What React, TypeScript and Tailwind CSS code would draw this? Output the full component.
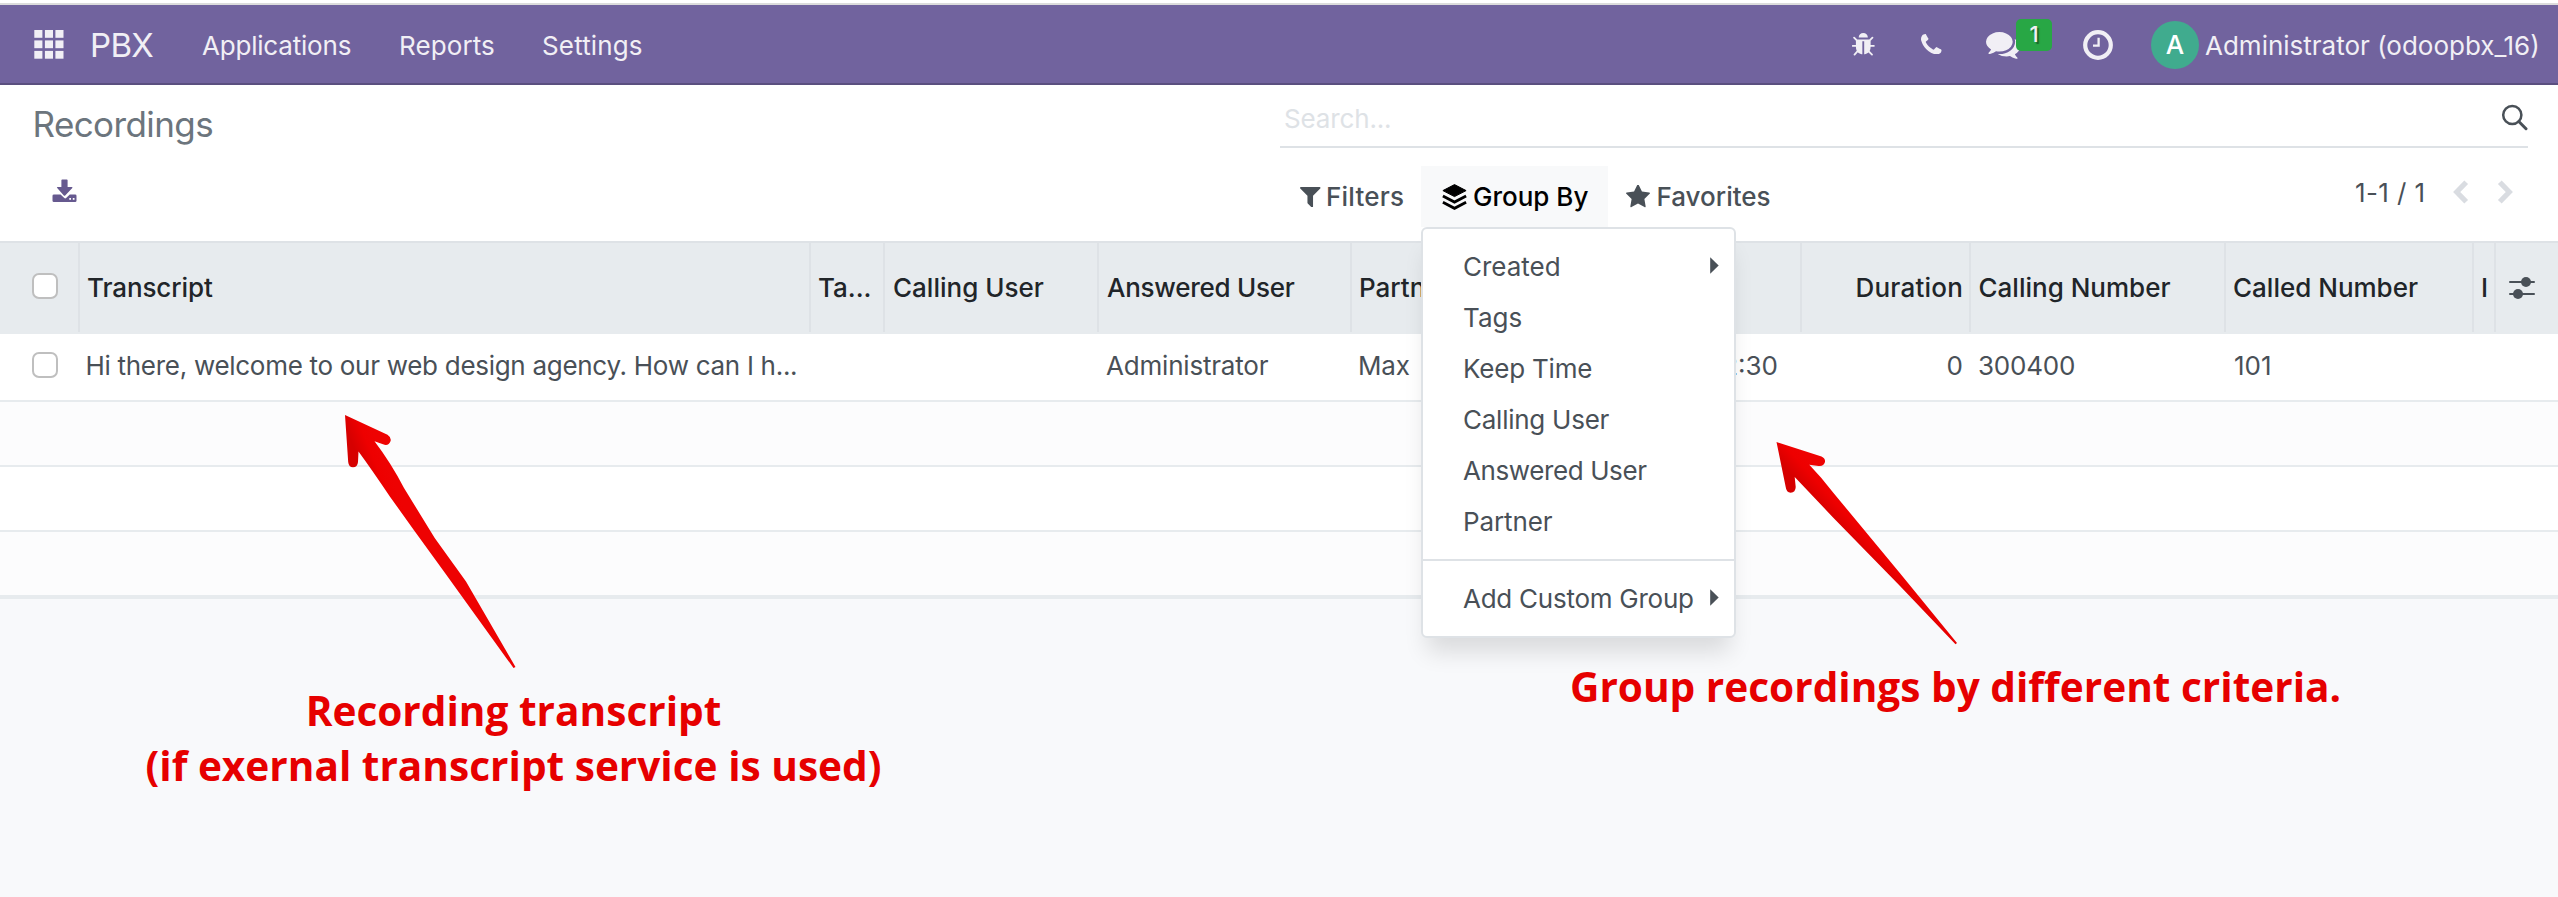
import { clsx } from 'clsx';
import type { ReactNode } from 'react';

function AppsIcon() {
  return (
    <svg className="block h-[29px] w-[30px]" viewBox="0 0 30 29" fill="currentColor">
      {[0, 10.4, 20.9].map((y) =>
        [0.3, 10.9, 21.4].map((x) => <rect key={`${x}-${y}`} x={x} y={y} width="8.1" height="7.8" />),
      )}
    </svg>
  );
}

function BugIcon() {
  return (
    <svg className="block h-[23px] w-[23px]" viewBox="112 64 1600 1600" fill="currentColor">
      <path d="M1696 960q0 26-19 45t-45 19h-224q0 171-67 290l208 209q19 19 19 45t-19 45q-18 19-45 19t-45-19l-198-197q-5 5-15 13t-42 28.5-65 36.5-82 29-97 13v-896h-128v896q-51 0-101.5-13.5t-87-33-66-39-43.5-32.5l-15-14-183 207q-20 21-48 21-24 0-43-17-19-18-20.5-44.5t15.5-46.5l202-227q-58-114-58-274h-224q-26 0-45-19t-19-45 19-45 45-19h224v-294l-173-173q-19-19-19-45t19-45 45-19 45 19l173 173h844l173-173q19-19 45-19t45 19 19 45-19 45l-173 173v294h224q26 0 45 19t19 45zm-480-576h-640q0-133 93.5-226.5t226.5-93.5 226.5 93.5 93.5 226.5z" />
    </svg>
  );
}

function PhoneIcon() {
  return (
    <svg className="block h-[20.5px] w-[20.5px]" viewBox="192 128 1408 1408" fill="currentColor">
      <path d="M1600 1240q0 27-10 70.5t-21 68.5q-21 50-122 106-94 51-186 51-27 0-53-3.5t-57.5-12.5-47-14.5-55.5-20.5-49-18q-98-35-175-83-127-79-264-216t-216-264q-48-77-83-175-3-9-18-49t-20.5-55.5-14.5-47-12.5-57.5-3.5-53q0-92 51-186 56-101 106-122 25-11 68.5-21t70.5-10q14 0 21 3 18 6 53 76 11 19 30 54t35 63.5 31 53.5q3 4 17.5 25t21.5 35.5 7 28.5q0 20-28.5 50t-62 55-62 53-28.5 46q0 9 5 22.5t8.5 20.5 14 24 11.5 19q76 137 174 235t235 174q2 1 19 11.5t24 14 20.5 8.5 22.5 5q18 0 46-28.5t53-62 55-62 50-28.5q14 0 28.5 7t35.5 21.5 25 17.5q25 15 53.5 31t63.5 35 54 30q70 35 76 53 3 7 3 21z" />
    </svg>
  );
}

function CommentsIcon() {
  return (
    <svg className="block h-[27px] w-[34px]" viewBox="0 256 1792 1410" fill="currentColor">
      <path d="M1408 768q0 139-94 257t-256.5 186.5-353.5 68.5q-86 0-176-16-124 88-278 128-36 9-86 16h-3q-11 0-20.5-8t-11.5-21q-1-3-1-6.5t.5-6.5 2-6l2.5-5 3.5-5.5 4-5 4.5-5 4-4.5q5-6 23-25t26-29.5 22.5-29 25-38.5 20.5-44q-124-72-195-177t-71-224q0-139 94-257t256.5-186.5 353.5-68.5 353.5 68.5 256.5 186.5 94 257zm384 256q0 120-71 224.5t-195 176.5q10 24 20.5 44t25 38.5 22.5 29 26 29.5 23 25q1 1 4 4.5t4.5 5 4 5 3.5 5.5l2.5 5 2 6 .5 6.5-1 6.5q-3 14-13 22t-22 7q-50-7-86-16-154-40-278-128-90 16-176 16-271 0-472-132 58 4 88 4 161 0 309-45t264-129q125-92 192-212t67-254q0-77-23-152 129 71 204 178t75 230z" />
    </svg>
  );
}

function ClockIcon() {
  return (
    <svg className="block h-[30px] w-[30px]" viewBox="0 0 30 30" fill="none" stroke="currentColor">
      <circle cx="15" cy="15" r="12.8" strokeWidth="4.2" />
      <path d="M15.6 7.8v7.9H10" strokeWidth="2.3" />
    </svg>
  );
}

function DownloadIcon() {
  return (
    <svg className="block h-[24px] w-[26px]" viewBox="0 0 26 24" fill="currentColor">
      <path d="M2 15.4h6.600l3.700 3.600q.9.800 1.800 0l3.700-3.600h5.300q1.400 0 1.400 1.400v4.900q0 1.400-1.400 1.400H1.900q-1.400 0-1.400-1.400v-4.900q0-1.400 1.500-1.400z" />
      <path d="M10.2.4h4.600q.8 0 .8.8v6.700h4.300q1.100.2.400 1.100l-7.100 7.500q-.7.500-1.400 0L5.200 9q-.8-.9.300-1.100h3.900V1.200q0-.8.8-.8z" />
      <rect x="17.3" y="19" width="1.7" height="1.8" fill="#fff" />
      <rect x="20.8" y="19" width="1.7" height="1.8" fill="#fff" />
    </svg>
  );
}

function SearchIcon() {
  return (
    <svg className="block h-[27px] w-[27px]" viewBox="0 0 27 27" fill="none" stroke="currentColor">
      <circle cx="11.3" cy="11" r="9.1" strokeWidth="2.5" />
      <path d="M17.8 17.5l7.2 7.2" strokeWidth="3" strokeLinecap="round" />
    </svg>
  );
}

function FilterIcon() {
  return (
    <svg className="block h-[20.5px] w-[20.5px]" viewBox="192 256 1408 1408" fill="currentColor">
      <path d="M1595 295q17 41-14 70l-493 493v742q0 42-39 59-13 5-25 5-27 0-45-19l-256-256q-19-19-19-45v-486l-493-493q-31-29-14-70 17-39 59-39h1280q42 0 59 39z" />
    </svg>
  );
}

function LayersIcon() {
  return (
    <svg className="block h-[27px] w-[25px]" viewBox="0 0 25 27" fill="none" stroke="currentColor">
      <path d="M12.5.6l11.6 6-11.6 6-11.6-6z" fill="currentColor" strokeWidth="1" strokeLinejoin="round" />
      <path d="M.9 12.1l11.6 6 11.6-6" strokeWidth="2.8" />
      <path d="M.9 18.3l11.6 6 11.6-6" strokeWidth="2.8" />
    </svg>
  );
}

function StarIcon() {
  return (
    <svg className="block h-[23px] w-[24px]" viewBox="64 128 1664 1500" fill="currentColor">
      <path d="M1728 647q0 22-26 48l-363 354 86 500q1 7 1 20 0 21-10.5 35.5t-30.5 14.5q-19 0-40-12l-449-236-449 236q-22 12-40 12-21 0-31.5-14.5t-10.5-35.5q0-6 2-20l86-500-364-354q-25-27-25-48 0-37 56-46l502-73 225-455q19-41 49-41t49 41l225 455 502 73q56 9 56 46z" />
    </svg>
  );
}

function Chevron({ flip = false }: { flip?: boolean }) {
  return (
    <svg
      className={clsx('block h-[24px] w-[16px] text-[#d9dce1]', flip && '-scale-x-100')}
      viewBox="0 0 16 24"
      fill="none"
      stroke="currentColor"
    >
      <path d="M13.2 2.2L3.7 12l9.5 9.8" strokeWidth="5.2" />
    </svg>
  );
}

function SlidersIcon() {
  return (
    <svg className="block h-[24px] w-[28px]" viewBox="0 0 28 24" fill="currentColor">
      <rect x="1" y="5" width="26" height="2" rx="1" />
      <rect x="1" y="17" width="26" height="2" rx="1" />
      <circle cx="18" cy="6" r="5" />
      <circle cx="10" cy="18" r="5" />
    </svg>
  );
}

function Caret() {
  return (
    <svg className="block h-[17px] w-[9px]" viewBox="0 0 9 17" fill="currentColor">
      <path d="M.2.2L8.7 8.5.2 16.8z" />
    </svg>
  );
}

function Checkbox() {
  return <span className="block size-[26px] rounded-[7px] border-2 border-[#bfbfbf] bg-white" />;
}

function NavBar() {
  return (
    <header className="flex h-20 items-center border-b-2 border-[#5a4f7f] bg-[#71639e] pt-[3px] pl-[34px] text-[#f1eff5]">
      <div className="mb-[2px] w-[56px] shrink-0">
        <AppsIcon />
      </div>
      <div className="w-[112px] shrink-0 text-[33px] tracking-[-0.7px]">PBX</div>
      <div className="w-[197px] shrink-0 tracking-[-0.2px]">Applications</div>
      <div className="w-[143px] shrink-0 tracking-[0.1px]">Reports</div>
      <div className="tracking-[0.15px]">Settings</div>
      <div className="ml-auto flex h-full items-center">
        <div className="mb-[3px] w-[69px]">
          <BugIcon />
        </div>
        <div className="mb-[3px] w-[65px]">
          <PhoneIcon />
        </div>
        <div className="relative w-[97px]">
          <CommentsIcon />
          <span className="absolute top-[-13px] left-[30px] flex h-[32px] w-[36px] items-center justify-center rounded-[5px] bg-[#28a745] pb-[2px] text-[22px] font-medium [text-shadow:2px_2px_1px_rgba(0,0,0,0.4)]">
            1
          </span>
        </div>
        <div className="mb-[1px] w-[68px]">
          <ClockIcon />
        </div>
        <div className="mb-[1px] flex size-12 items-center justify-center rounded-full bg-[#40ab8e] font-medium text-white">
          A
        </div>
        <div className="ml-[6px] w-[353px]">Administrator (odoopbx_16)</div>
      </div>
    </header>
  );
}

function MenuItem({ label, tracking, sub = false }: { label: string; tracking?: string; sub?: boolean }) {
  return (
    <li className="flex h-[51px] items-center justify-between pr-[15px] pl-[40px]">
      <span className={tracking}>{label}</span>
      {sub && (
        <span className="mb-[3px]">
          <Caret />
        </span>
      )}
    </li>
  );
}

function GroupByMenu() {
  return (
    <ul className="absolute top-[61px] left-0 z-10 h-[411px] w-[315px] rounded-[6px] border-2 border-[#dee2e6] bg-white pt-[12px] font-normal text-[#495057] shadow-[0_20px_22px_-6px_rgba(0,0,0,0.12)]">
      <MenuItem label="Created" sub />
      <MenuItem label="Tags" />
      <MenuItem label="Keep Time" tracking="tracking-[-0.2px]" />
      <MenuItem label="Calling User" tracking="tracking-[-0.25px]" />
      <MenuItem label="Answered User" tracking="tracking-[-0.4px]" />
      <MenuItem label="Partner" tracking="tracking-[-0.1px]" />
      <li className="my-[12px] h-[2px] bg-[#dee2e6]" />
      <MenuItem label="Add Custom Group" tracking="tracking-[-0.25px]" sub />
    </ul>
  );
}

function ControlPanel() {
  return (
    <section className="flex h-[156px] bg-white">
      <div className="w-[1280px]">
        <h1 className="flex h-[63px] items-center pt-[16px] pl-[32.5px] text-[35px] tracking-[-0.6px] text-[#6c757d]">
          Recordings
        </h1>
        <div className="pt-[31px] pl-[51.500px] text-[#66598f]">
          <DownloadIcon />
        </div>
      </div>
      <div className="w-[1248px]">
        <div className="flex h-[63px] items-center justify-between border-b-2 border-[#dee2e6] pt-[6px] pl-[4px]">
          <span className="tracking-[-0.15px] text-[#dee2e6]">Search...</span>
          <span className="mb-[2px] text-[#495057]">
            <SearchIcon />
          </span>
        </div>
        <div className="flex pt-[18px] font-medium text-[#495057]">
          <div className="flex h-[61px] w-[141px] items-center pt-[1px] pl-[20px]">
            <FilterIcon />
            <span className="ml-[5.5px] tracking-[0.2px]">Filters</span>
          </div>
          <div className="relative flex h-[61px] w-[187px] items-center bg-[#f8f9fa] pt-[1px] pl-[21px] text-black">
            <LayersIcon />
            <span className="ml-[6px]">Group By</span>
            <GroupByMenu />
          </div>
          <div className="flex h-[61px] items-center pt-[1px] pl-[18px]">
            <span className="mb-[2px]">
              <StarIcon />
            </span>
            <span className="ml-[6.5px]">Favorites</span>
          </div>
          <div className="mt-[-5px] ml-auto flex h-[61px] items-center font-normal">
            <span className="w-[98px] pt-[2px] tracking-[0.4px]">1-1 / 1</span>
            <span className="mr-[28px]">
              <Chevron />
            </span>
            <span className="mr-[15px]">
              <Chevron flip />
            </span>
          </div>
        </div>
      </div>
    </section>
  );
}

const columns = 'grid grid-cols-[80px_731px_74px_214px_253px_168px_282px_169px_255px_248px_22px_62px]';

function Head({ children, className }: { children?: ReactNode; className?: string }) {
  return (
    <div className={clsx('flex h-[89px] items-center overflow-hidden border-r-2 border-[#dee2e6] whitespace-nowrap', className)}>
      {children}
    </div>
  );
}

function Cell({ children, className }: { children?: ReactNode; className?: string }) {
  return <div className={clsx('flex items-center overflow-hidden whitespace-nowrap', className)}>{children}</div>;
}

function RecordingsTable() {
  return (
    <section className="bg-white text-[#495057]">
      <div className={clsx(columns, 'h-[93px] border-t-2 border-[#dee2e6] bg-[#e7ebee] font-medium text-[#212529]')}>
        <Head className="pb-[3px] pl-[32px]">
          <Checkbox />
        </Head>
        <Head className="pl-[7px] tracking-[-0.1px]">Transcript</Head>
        <Head className="pl-[7px]">Ta...</Head>
        <Head className="pl-[8px]">Calling User</Head>
        <Head className="pl-[8px] tracking-[-0.25px]">Answered User</Head>
        <Head className="pl-[7px]">Partner</Head>
        <Head />
        <Head className="justify-end pr-[6px] tracking-[0.2px]">Duration</Head>
        <Head className="pl-[7.5px]">Calling Number</Head>
        <Head className="pl-[7px]">Called Number</Head>
        <Head className="pl-[7px]">I</Head>
        <div className="flex h-[89px] items-center pl-[12px] text-[#495057]">
          <SlidersIcon />
        </div>
      </div>
      <div className={clsx(columns, 'h-[68px] border-b-2 border-[#e7ebee] pb-[3px]')}>
        <Cell className="pb-[1px] pl-[32px]">
          <Checkbox />
        </Cell>
        <Cell className="pl-[5.5px] tracking-[-0.29px]">Hi there, welcome to our web design agency. How can I h...</Cell>
        <Cell />
        <Cell />
        <Cell className="pl-[7px] tracking-[-0.2px]">Administrator</Cell>
        <Cell className="pl-[6px] tracking-[-0.2px]">Max</Cell>
        <Cell className="justify-end pr-[24px]">02/27/2023 21:12:30</Cell>
        <Cell className="justify-end pr-[8px]">0</Cell>
        <Cell className="pl-[7px] tracking-[-0.2px]">300400</Cell>
        <Cell className="pl-[8px]">101</Cell>
        <Cell />
        <Cell />
      </div>
      <div className="h-[65px] border-b-2 border-[#e7ebee] bg-[#fcfcfd]" />
      <div className="h-[65px] border-b-2 border-[#e7ebee]" />
      <div className="h-[67px] border-b-4 border-[#e7ebee] bg-[#fcfcfd]" />
    </section>
  );
}

function Arrows() {
  return (
    <svg className="pointer-events-none absolute inset-0 z-20 h-[897px] w-[2558px]" viewBox="0 0 2558 897">
      <defs>
        <linearGradient id="left-arrow" gradientUnits="userSpaceOnUse" x1="358" y1="458" x2="380" y2="449">
          <stop offset="0" stopColor="#d60000" />
          <stop offset="0.6" stopColor="#ee0000" />
          <stop offset="1" stopColor="#ee0202" />
        </linearGradient>
        <linearGradient id="right-arrow" gradientUnits="userSpaceOnUse" x1="1796" y1="480" x2="1814" y2="464">
          <stop offset="0" stopColor="#d60000" />
          <stop offset="0.6" stopColor="#ee0000" />
          <stop offset="1" stopColor="#ee0202" />
        </linearGradient>
      </defs>
      <path
        fill="url(#left-arrow)"
        d="M345 415L387.5 434.8Q391.5 437.5 390.6 441Q388.5 446.5 383 444.3L374.5 441.3Q391 463 404 488L434.7 538L466 581.5L515.5 667L513.5 668L445 573L413.8 530L390 496.7Q372 470 358.5 451.5L358 462Q357.5 467.3 353 467.3Q348.7 467.3 348.2 462Z"
      />
      <path
        fill="url(#right-arrow)"
        d="M1776.5 442L1821.5 456.6Q1825.5 458.5 1825 462Q1823.5 466.8 1818.5 466L1809.3 464.8Q1822 478 1833.3 492.7L1900 573.3L1957 643L1955.5 644.3L1900 586L1833.3 517.7L1794.7 477L1795.7 487Q1795.5 492.5 1790.7 492.8Q1786.3 492.5 1785.7 487Z"
      />
    </svg>
  );
}

export default function App() {
  return (
    <div className="relative h-[897px] w-[2558px] overflow-hidden bg-[#f8f9fb] font-['Inter',sans-serif] text-[26px] leading-none">
      <div className="h-[5px] border-b-2 border-[#dcdcdc] bg-white" />
      <NavBar />
      <ControlPanel />
      <RecordingsTable />
      <Arrows />
      <p className="absolute top-[683px] left-[145.5px] z-20 w-[736px] text-center font-['Open_Sans',sans-serif] text-[40.6px] leading-[55px] font-bold whitespace-nowrap text-[#e60000]">
        Recording transcript
        <br />
        (if exernal transcript service is used)
      </p>
      <p className="absolute top-[659px] left-[1570px] z-20 font-['Open_Sans',sans-serif] text-[40.6px] leading-[55px] font-bold whitespace-nowrap text-[#e60000]">
        Group recordings by different criteria.
      </p>
    </div>
  );
}
